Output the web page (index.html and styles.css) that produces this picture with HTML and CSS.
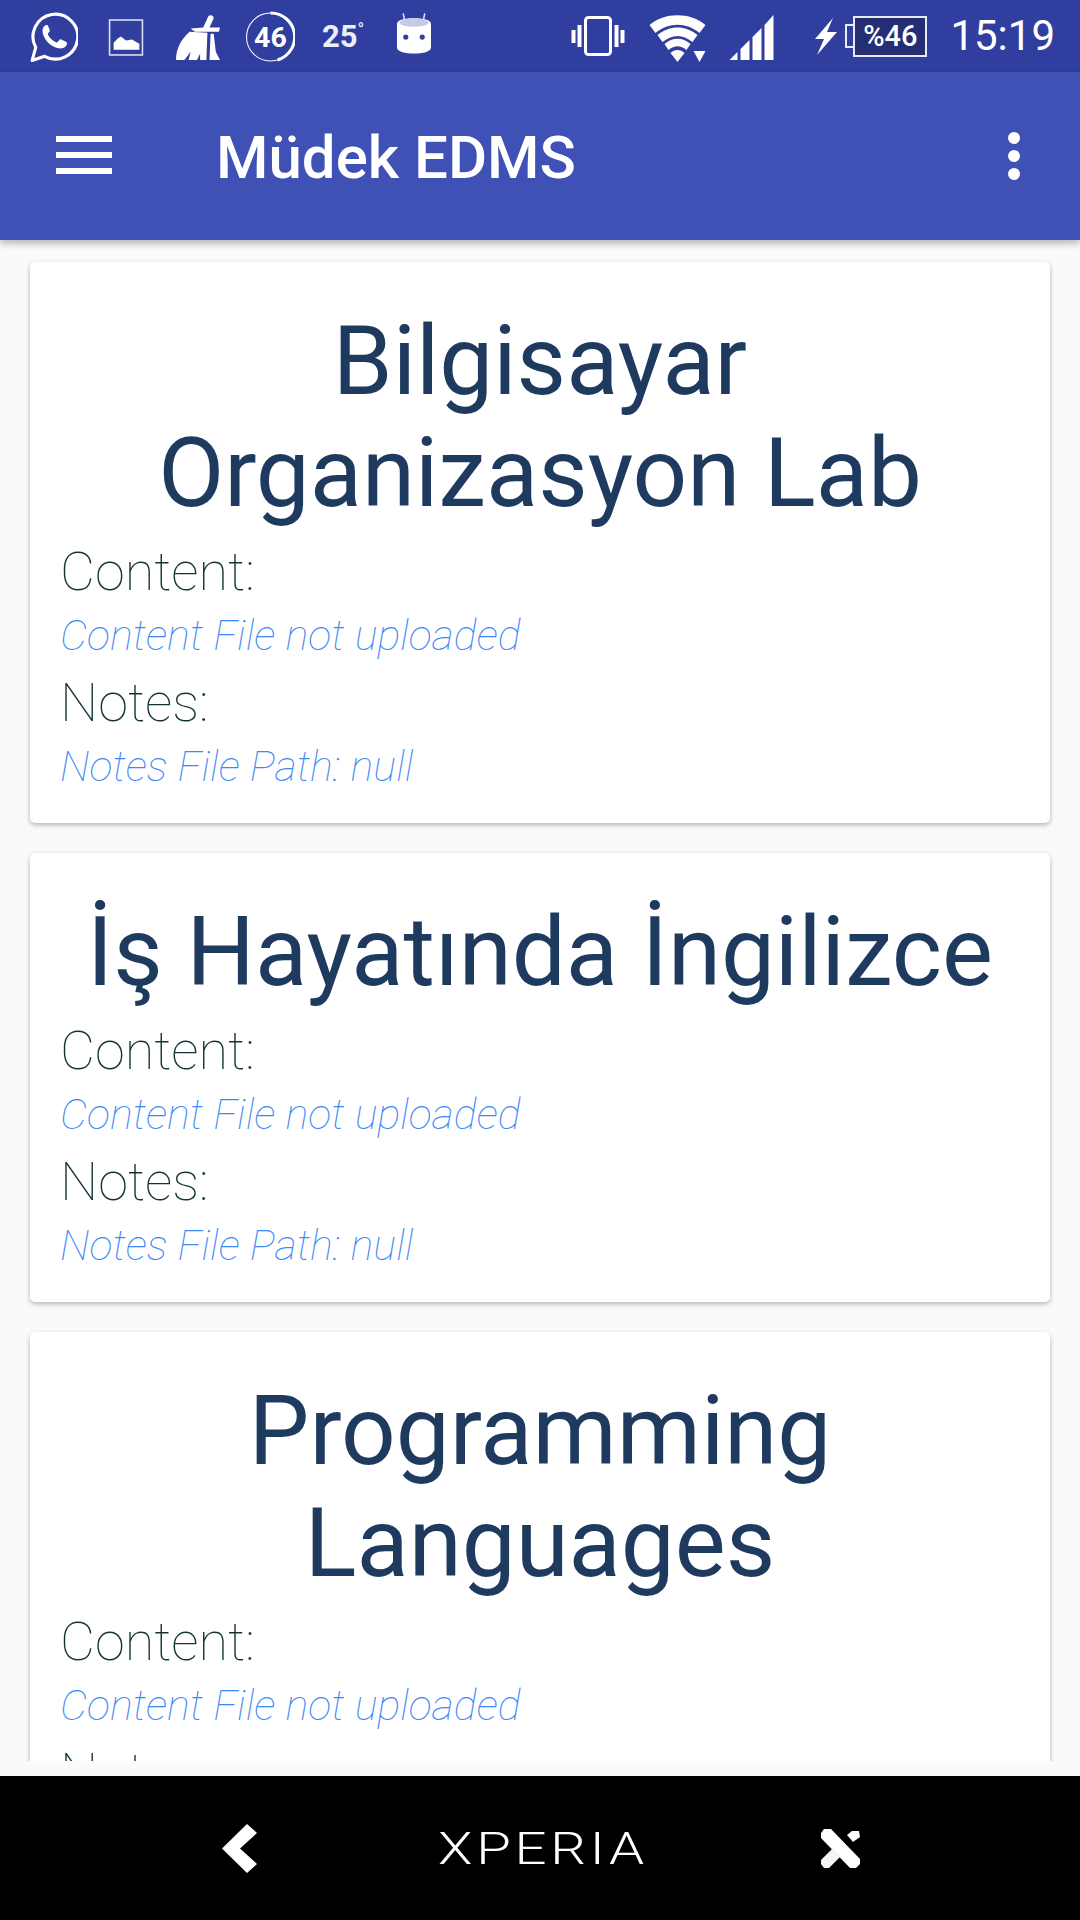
FILE: index.html
```html
<!DOCTYPE html>
<html lang="tr">
<head>
  <meta charset="UTF-8">
  <title>Müdek EDMS</title>
  <link rel="stylesheet" href="styles.css">
</head>
<body>
  <div class="status-bar">
    <svg class="ic ic-whatsapp" viewBox="0 0 46 48"><path d="M2 46.500 L5.500 34 A21.500 21.500 0 1 1 14 42.500 Z" fill="none" stroke="#fff" stroke-width="3" stroke-linejoin="round"/><path d="M16 12.500c-1.800 0-4 2.300-4 5.500 0 8 9 17 17.500 17 3.500 0 5.500-2 6-4.500 .2-1-.2-1.500-1-2l-4.500-2.200c-.8-.4-1.400-.2-1.900 .5l-1.700 2.100c-.4 .5-.9 .5-1.500 .2-3-1.300-6-4-7.700-7.300-.3-.6-.2-1 .2-1.400l1.300-1.600c.4-.5 .5-1 .2-1.600l-1.800-4.200c-.3-.4-.6-.5-1.100-.5z" fill="#fff"/></svg>
    <svg class="ic ic-image" viewBox="0 0 34 36"><rect x="1" y="1" width="32" height="34" fill="none" stroke="#dfe2f3" stroke-width="1.500"/><path d="M5 30 V23 L9 19 L12 17 L17 21 L23 20 L26 22 L30 24 V30 Z" fill="#fff"/></svg>
    <svg class="ic ic-broom" viewBox="0 0 42 43"><path d="M31 1 C33 -0.500 36 0.500 36 3 L32 12 L42 12 L41 16 L18 16 L14 13 L26 12 Z" fill="#fff"/><path d="M13 16 L30 17 L29 43 L23 43 L23 37 L20 43 L12 43 L14 35 L8 43 L0 43 C0 32 5 23 13 16 Z" fill="#fff"/><path d="M33 18 L36 18 L38 35 L42 43 L32 43 Z" fill="#fff"/></svg>
    <svg class="ic ic-usage" viewBox="0 0 48 51"><circle cx="24" cy="25.500" r="23.500" fill="none" stroke="#fff" stroke-width="1"/><path d="M24 2 A23.500 23.500 0 0 1 31 48" fill="none" stroke="#fff" stroke-width="3"/><text x="24" y="35" class="usage-text">46</text></svg>
    <span class="temp">25<sup>°</sup></span>
    <svg class="ic ic-android" viewBox="0 0 33 40"><path d="M8 9 L6 0 M25 9 L27 0" stroke="#dfe2f3" stroke-width="1.500"/><path d="M0 10 C0 3 33 3 33 10 V33 C33 41 0 41 0 33 Z" fill="#fff"/><ellipse cx="16.500" cy="9" rx="14" ry="4" fill="#c5cae9"/><circle cx="8.500" cy="23" r="2.500" fill="#303f9f"/><circle cx="24.500" cy="23" r="2.500" fill="#303f9f"/></svg>
    <div class="status-right">
      <svg class="ic ic-vibrate" viewBox="0 0 53 40"><rect x="14" y="1.500" width="25" height="37" rx="3" fill="none" stroke="#fff" stroke-width="3"/><rect x="0" y="14" width="4" height="13" fill="#fff"/><rect x="6" y="9" width="4" height="22" fill="#fff"/><rect x="43" y="9" width="4" height="22" fill="#fff"/><rect x="49" y="14" width="4" height="13" fill="#fff"/></svg>
      <svg class="ic ic-wifi" viewBox="0 0 57 48"><path d="M0 10 C15 -3 41 -3 56 10 L50 18 C37 7 19 7 6 18 Z" fill="#fff"/><path d="M8 20 C20 10 36 10 48 20 L43 27 C33 19 23 19 13 27 Z" fill="#fff"/><path d="M15 29 C23 22 33 22 41 29 L37 35 C31 30 25 30 19 35 Z" fill="#fff"/><path d="M21 38 C25 34 31 34 35 38 L28 47 Z" fill="#fff"/><path d="M44 36 H56 L50 47 Z" fill="#fff"/></svg>
      <svg class="ic ic-signal" viewBox="0 0 44 45"><path d="M0 45 L8 37 V45 Z M11 34 L20 25 V45 H11 Z M23 22 L32 13 V45 H23 Z M35 10 L44 0 V45 H35 Z" fill="#fff"/></svg>
      <svg class="ic ic-bolt" viewBox="0 0 22 37"><path d="M18 0 L0 21 L9 21 L2 37 L22 14 L12 14 Z" fill="#fff"/></svg>
      <div class="battery"><span class="battery-cap"></span><span class="battery-body">%46</span></div>
      <span class="clock">15:19</span>
    </div>
  </div>

  <header class="toolbar">
    <div class="menu"><span></span><span></span><span></span></div>
    <h1 class="app-title">Müdek EDMS</h1>
    <div class="more"><span></span><span></span><span></span></div>
  </header>

  <main class="list">
    <section class="card">
      <h2 class="card-title">Bilgisayar Organizasyon Lab</h2>
      <div class="label">Content:</div>
      <div class="path">Content File not uploaded</div>
      <div class="label">Notes:</div>
      <div class="path">Notes File Path: null</div>
    </section>
    <section class="card">
      <h2 class="card-title">İş Hayatında İngilizce</h2>
      <div class="label">Content:</div>
      <div class="path">Content File not uploaded</div>
      <div class="label">Notes:</div>
      <div class="path">Notes File Path: null</div>
    </section>
    <section class="card">
      <h2 class="card-title">Programming Languages</h2>
      <div class="label">Content:</div>
      <div class="path">Content File not uploaded</div>
      <div class="label">Notes:</div>
      <div class="path">Notes File Path: null</div>
    </section>
  </main>

  <nav class="nav-bar">
    <svg class="ic-back" viewBox="0 0 35 49"><path d="M25 0 L35 9 L18 24.500 L35 40 L25 49 L0 24.500 Z" fill="#fff"/></svg>
    <span class="brand">XPERIA</span>
    <svg class="ic-close" viewBox="0 0 39 39"><path d="M0 4 L3 0 L10 0 L39 30 L39 35 L35 39 L29 39 L0 9 Z" fill="#fff"/><path d="M0 31 L12 19 L20 27 L8 39 L3 39 L0 35 Z" fill="#f4f4f4"/><path d="M26 6 L31 2 L38 2 L39 8 L32 13 Z" fill="#fff"/></svg>
  </nav>
</body>
</html>
```

FILE: styles.css
```css
html, body {
  margin: 0;
  padding: 0;
}

body {
  width: 1080px;
  height: 1920px;
  display: flex;
  flex-direction: column;
  overflow: hidden;
  background-color: #fafafa;
  font-family: "Roboto", sans-serif;
}

.status-bar {
  height: 72px;
  flex: none;
  display: flex;
  align-items: center;
  padding: 0 25px 0 30px;
  background-color: #303f9f;
  color: white;
}

.ic {
  display: block;
  flex: none;
}

.ic-whatsapp { width: 48px; height: 50px; margin-top: 2px; }
.ic-image { width: 36px; height: 37px; margin-left: 30px; margin-top: 3px; }
.ic-broom { width: 44px; height: 45px; margin-left: 32px; margin-top: 3px; }
.ic-usage { width: 49px; height: 52px; margin-left: 26px; margin-top: 2px; }
.ic-android { width: 34px; height: 42px; margin-left: 34px; margin-top: -4px; }

.usage-text {
  font-size: 28px;
  font-weight: 700;
  fill: white;
  text-anchor: middle;
}

.temp {
  margin-left: 27px;
  width: 41px;
  font-size: 31px;
  font-weight: 700;
  color: #eceef8;
  white-space: nowrap;
}

.temp sup {
  font-size: 18px;
  font-weight: 400;
  line-height: 0;
}

.status-right {
  margin-left: auto;
  display: flex;
  align-items: center;
}

.ic-vibrate { width: 54px; height: 40px; }
.ic-wifi { width: 58px; height: 48px; margin-left: 24px; margin-top: 6px; }
.ic-signal { width: 45px; height: 45px; margin-left: 22px; margin-top: 3px; }
.ic-bolt { width: 24px; height: 37px; margin-left: 40px; }

.battery {
  display: flex;
  align-items: center;
  margin-left: 7px;
}

.battery-cap {
  width: 8px;
  height: 24px;
  border: 2px solid #e8eaf6;
  border-right: none;
  box-sizing: border-box;
}

.battery-body {
  width: 74px;
  height: 41px;
  box-sizing: border-box;
  border: 2px solid #e8eaf6;
  background-color: #252d75;
  font-size: 29px;
  font-weight: 500;
  line-height: 37px;
  text-align: center;
}

.clock {
  margin-left: 23px;
  font-size: 42px;
  line-height: 48px;
}

.toolbar {
  position: relative;
  z-index: 10;
  height: 168px;
  flex: none;
  display: flex;
  align-items: center;
  padding: 0 60px 0 56px;
  background-color: #3f51b5;
  color: white;
  box-shadow: 0 3px 8px rgba(0, 0, 0, 0.3);
}

.menu {
  display: flex;
  flex-direction: column;
  gap: 10px;
  width: 56px;
  margin-top: -2px;
}

.menu span {
  height: 6px;
  background-color: white;
}

.app-title {
  margin: 2px 0 0 104px;
  font-size: 60px;
  font-weight: 500;
}

.more {
  margin-left: auto;
  display: flex;
  flex-direction: column;
  gap: 6px;
}

.more span {
  width: 12px;
  height: 12px;
  border-radius: 50%;
  background-color: white;
}

.list {
  height: 1521px;
  flex: none;
  overflow: hidden;
  padding: 22px 30px 0;
  box-sizing: border-box;
}

.card {
  background-color: white;
  border-radius: 5px;
  box-shadow: 0 2px 5px rgba(0, 0, 0, 0.28);
  padding: 43px 30px 32px;
  margin-bottom: 30px;
}

.card-title {
  margin: 0 0 2px;
  font-size: 96px;
  font-weight: 400;
  text-align: center;
  color: #1e3a5f;
}

.label {
  margin-top: 11px;
  font-size: 54px;
  font-weight: 100;
  color: #123434;
}

.path {
  margin-top: 7px;
  font-size: 43px;
  font-weight: 100;
  font-style: italic;
  color: #3d88f5;
}

.nav-bar {
  margin-top: 15px;
  height: 144px;
  flex: none;
  display: flex;
  align-items: center;
  padding-left: 222px;
  background-color: black;
}

.ic-back { width: 35px; height: 49px; }

.brand {
  width: 205px;
  margin-left: 181px;
  color: white;
  font-size: 45px;
  font-weight: 300;
  letter-spacing: 3px;
  white-space: nowrap;
  transform: scaleX(1.25);
  transform-origin: left center;
}

.ic-close { width: 39px; height: 39px; margin-left: 178px; }
```
